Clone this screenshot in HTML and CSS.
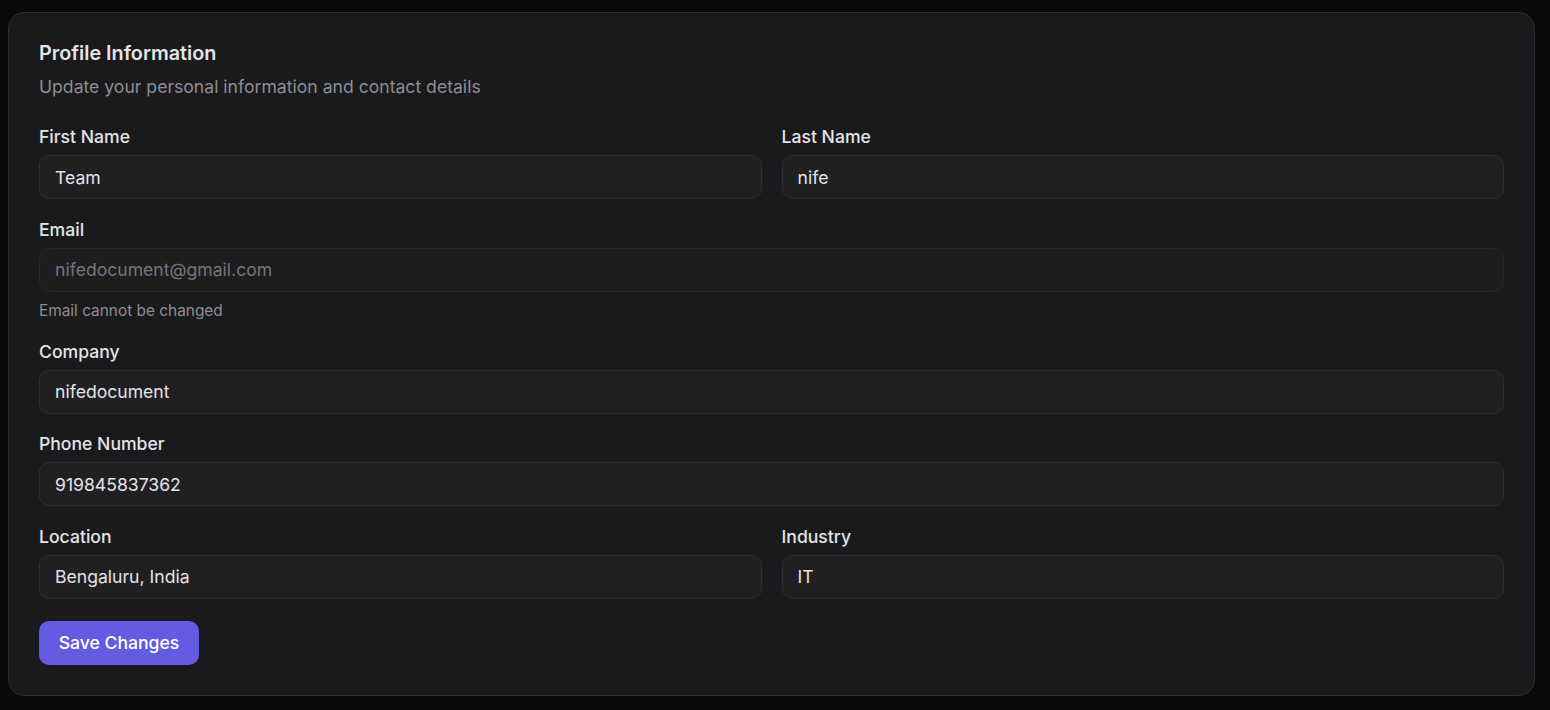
FILE: index.html
```html
<!DOCTYPE html>
<html>
<head>
<meta charset="utf-8">
<link rel="stylesheet" href="styles.css">
</head>
<body>
<div class="page">
  <section class="card">
    <header class="card-head">
      <h2 class="title">Profile Information</h2>
      <p class="subtitle">Update your personal information and contact details</p>
    </header>
    <form class="form">
      <div class="row two">
        <div class="field">
          <label class="label">First Name</label>
          <input class="input" value="Team">
        </div>
        <div class="field">
          <label class="label">Last Name</label>
          <input class="input" value="nife">
        </div>
      </div>
      <div class="field">
        <label class="label">Email</label>
        <input class="input disabled" value="nifedocument@gmail.com" disabled>
        <p class="hint">Email cannot be changed</p>
      </div>
      <div class="field">
        <label class="label">Company</label>
        <input class="input" value="nifedocument">
      </div>
      <div class="field">
        <label class="label">Phone Number</label>
        <input class="input" value="919845837362">
      </div>
      <div class="row two">
        <div class="field">
          <label class="label">Location</label>
          <input class="input" value="Bengaluru, India">
        </div>
        <div class="field">
          <label class="label">Industry</label>
          <input class="input" value="IT">
        </div>
      </div>
      <div class="actions">
        <button type="button" class="btn">Save Changes</button>
      </div>
    </form>
  </section>
</div>
</body>
</html>
```
FILE: styles.css
```css
* { box-sizing: border-box; }
html, body { margin: 0; padding: 0; }
body {
  background: #0a0a0b;
  font-family: Inter, "Liberation Sans", sans-serif;
  color: #e4e4e7;
  height: 710px;
  overflow: hidden;
}
.page {
  padding: 12px 15px 15px 8px;
}
.card {
  background: #1a1a1c;
  border: 1px solid #2c2c30;
  border-radius: 16px;
  padding: 27px 30px 30px 30px;
}
.card-head { margin-bottom: 25px; }
.title {
  margin: 0;
  font-size: 19.8px;
  font-weight: 600;
  line-height: 26px;
  color: #e4e4e7;
}
.subtitle {
  margin: 8px 0 0;
  font-size: 17.6px;
  line-height: 26px;
  color: #8e8e96;
}
.form {
  display: flex;
  flex-direction: column;
  gap: 18.5px;
}
.row.two {
  display: grid;
  grid-template-columns: 1fr 1fr;
  gap: 20px;
}
.field {
  display: flex;
  flex-direction: column;
}
.label {
  font-size: 17.6px;
  font-weight: 500;
  line-height: 24px;
  color: #e4e4e7;
  margin-bottom: 6px;
}
.input {
  height: 44px;
  width: 100%;
  background: #202023;
  border: 1px solid #2e2e32;
  border-radius: 10px;
  padding: 0 15px;
  font-family: Inter, "Liberation Sans", sans-serif;
  font-size: 17.6px;
  color: #e4e4e7;
  outline: none;
}
.input.disabled {
  background: #1d1d20;
  border-color: #26262a;
  color: #76767c;
}
.hint {
  margin: 9.5px 0 0;
  font-size: 15.4px;
  line-height: 20px;
  color: #8e8e96;
}
.actions { display: flex; padding-top: 3.5px; }
.btn {
  height: 44px;
  width: 160px;
  border: none;
  border-radius: 10px;
  background: #635be2;
  color: #ffffff;
  font-family: Inter, "Liberation Sans", sans-serif;
  font-size: 17.6px;
  font-weight: 500;
  cursor: pointer;
}
```
